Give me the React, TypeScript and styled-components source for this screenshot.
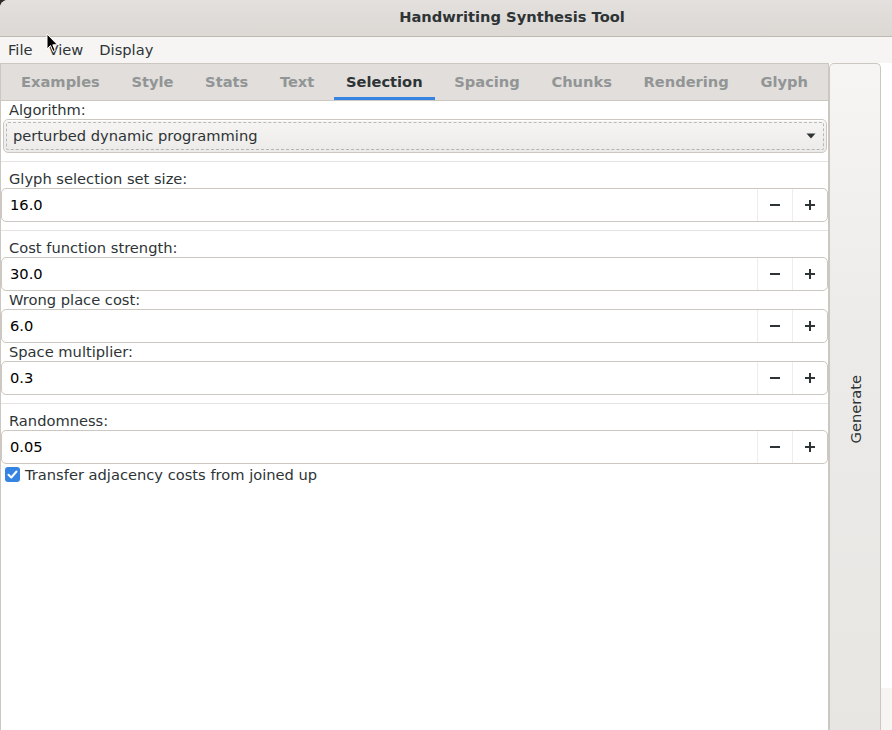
import React from "react";
import styled, { createGlobalStyle } from "styled-components";

const GlobalStyle = createGlobalStyle`
  html, body { margin: 0; padding: 0; background: #2b2b2b; }
  body { width: 892px; height: 730px; overflow: hidden; font-family: "DejaVu Sans", sans-serif; font-size: 14.67px; color: #2e3436; }
  * { box-sizing: border-box; }
`;

const FONT = "14.67px";

const Window = styled.div`
  position: relative;
  width: 892px;
  height: 730px;
  display: flex;
  flex-direction: column;
  background: #ffffff;
  border-top-left-radius: 8px;
  overflow: hidden;
`;

const TitleBar = styled.div`
  height: 37px;
  flex: none;
  display: flex;
  align-items: center;
  justify-content: center;
  padding-left: 132px;
  padding-bottom: 3px;
  background: linear-gradient(#e3e0dd, #dcd8d4);
  border-bottom: 1px solid #bfb9b3;
  font-weight: bold;
  font-size: ${FONT};
  color: #2e3436;
`;

const MenuBar = styled.div`
  height: 26px;
  flex: none;
  display: flex;
  align-items: center;
  padding-bottom: 2px;
  background: #f6f5f4;
`;

const MenuItem = styled.div`
  padding: 0 8px;
  font-size: ${FONT};
  color: #2e3436;
`;

const Main = styled.div`
  flex: 1;
  display: flex;
  min-height: 0;
`;

const Notebook = styled.div`
  width: 829px;
  flex: none;
  display: flex;
  flex-direction: column;
  border-left: 1px solid #cdc7c2;
  border-right: 1px solid #cdc7c2;
  border-top: 1px solid #cdc7c2;
`;

const TabHeader = styled.div`
  height: 37px;
  flex: none;
  display: flex;
  gap: 7.6px;
  padding-left: 8px;
  background: #e1dedb;
  border-bottom: 1px solid #cdc7c2;
  overflow: hidden;
`;

const Tab = styled.div<{ $active?: boolean }>`
  height: 36px;
  padding: 0 12px 2px;
  display: flex;
  align-items: center;
  flex: none;
  font-weight: bold;
  font-size: ${FONT};
  color: ${(p) => (p.$active ? "#2e3436" : "#929595")};
  box-shadow: ${(p) => (p.$active ? "inset 0 -3px 0 #3584e4" : "none")};
`;

const Page = styled.div`
  flex: 1;
  background: #ffffff;
  display: flex;
  flex-direction: column;
`;

const Label = styled.div`
  height: 18px;
  line-height: 18px;
  padding-left: 8px;
  font-size: ${FONT};
  color: #2e3436;
`;

const Combo = styled.div`
  height: 34px;
  margin: 0 1px 0 2px;
  display: flex;
  align-items: center;
  justify-content: space-between;
  padding: 0 10px 1px 9px;
  border: 1px solid #cdc7c2;
  border-radius: 5px;
  background: linear-gradient(#f6f5f4, #edebe9);
  outline: 1px dashed rgba(46, 52, 54, 0.3);
  outline-offset: -4px;
  font-size: ${FONT};
  color: #2e3436;
  box-shadow: inset 0 1px rgba(255, 255, 255, 0.8);
`;

const Separator = styled.div`
  height: 1px;
  margin: 8px 0;
  background: #e6e3e0;
  flex: none;
`;

const Spin = styled.div`
  height: 34px;
  display: flex;
  align-items: stretch;
  border: 1px solid #cdc7c2;
  border-radius: 5px;
  background: #ffffff;
  flex: none;
`;

const SpinValue = styled.div`
  flex: 1;
  display: flex;
  align-items: center;
  padding: 0 0 1px 8px;
  font-size: ${FONT};
  color: #000000;
`;

const SpinButton = styled.div`
  width: 35px;
  display: flex;
  align-items: center;
  justify-content: center;
  border-left: 1px solid #efedeb;
  color: #2e3436;
`;

const CheckRow = styled.div`
  height: 22px;
  display: flex;
  align-items: center;
  gap: 5px;
  padding: 0 0 1px 4px;
  font-size: ${FONT};
  color: #2e3436;
`;

const CheckBox = styled.div`
  width: 15px;
  height: 15px;
  border-radius: 3px;
  background: #3584e4;
  display: flex;
  align-items: center;
  justify-content: center;
`;

const GenerateButton = styled.div`
  width: 52px;
  flex: none;
  display: flex;
  align-items: center;
  justify-content: center;
  padding-top: 24px;
  border: 1px solid #cdc7c2;
  border-bottom: none;
  border-radius: 5px 5px 0 0;
  background: linear-gradient(#f6f5f4, #edebe9 40%, #e8e6e3);
`;

const Vertical = styled.span`
  display: inline-block;
  writing-mode: vertical-rl;
  transform: rotate(180deg);
  font-size: ${FONT};
  color: #2e3436;
`;

const RightStrip = styled.div`
  flex: 1;
  display: flex;
  flex-direction: column;
  justify-content: flex-end;
  background: #ffffff;
`;

const StripBottom = styled.div`
  height: 42px;
  background: #f6f5f4;
`;

const Cursor = styled.svg`
  position: absolute;
  left: 46px;
  top: 33px;
`;

const Minus = () => (
  <svg width="12" height="12" viewBox="0 0 12 12">
    <rect x="1" y="5" width="10" height="2" fill="#2e3436" />
  </svg>
);

const Plus = () => (
  <svg width="12" height="12" viewBox="0 0 12 12">
    <rect x="1" y="5" width="10" height="2" fill="#2e3436" />
    <rect x="5" y="1" width="2" height="10" fill="#2e3436" />
  </svg>
);

const SpinField = ({ value }: { value: string }) => (
  <Spin>
    <SpinValue>{value}</SpinValue>
    <SpinButton>
      <Minus />
    </SpinButton>
    <SpinButton>
      <Plus />
    </SpinButton>
  </Spin>
);

const tabs = ["Examples", "Style", "Stats", "Text", "Selection", "Spacing", "Chunks", "Rendering", "Glyph"];

export default function App() {
  return (
    <>
      <GlobalStyle />
      <Window>
        <TitleBar>Handwriting Synthesis Tool</TitleBar>
        <MenuBar>
          <MenuItem>File</MenuItem>
          <MenuItem>View</MenuItem>
          <MenuItem>Display</MenuItem>
        </MenuBar>
        <Main>
          <Notebook>
            <TabHeader>
              {tabs.map((t) => (
                <Tab key={t} $active={t === "Selection"}>
                  {t}
                </Tab>
              ))}
            </TabHeader>
            <Page>
              <Label>Algorithm:</Label>
              <Combo>
                <span>perturbed dynamic programming</span>
                <svg width="10" height="6" viewBox="0 0 10 6">
                  <path d="M0.5 0.5 L9.5 0.5 L5 5.5 Z" fill="#2e3436" />
                </svg>
              </Combo>
              <Separator />
              <Label>Glyph selection set size:</Label>
              <SpinField value="16.0" />
              <Separator />
              <Label>Cost function strength:</Label>
              <SpinField value="30.0" />
              <Label>Wrong place cost:</Label>
              <SpinField value="6.0" />
              <Label>Space multiplier:</Label>
              <SpinField value="0.3" />
              <Separator />
              <Label>Randomness:</Label>
              <SpinField value="0.05" />
              <CheckRow>
                <CheckBox>
                  <svg width="11" height="11" viewBox="0 0 11 11">
                    <path d="M1.5 5.8 L4.3 8.5 L9.5 2.5" fill="none" stroke="#ffffff" strokeWidth="2" strokeLinecap="round" strokeLinejoin="round" />
                  </svg>
                </CheckBox>
                <span>Transfer adjacency costs from joined up</span>
              </CheckRow>
            </Page>
          </Notebook>
          <GenerateButton>
            <Vertical>Generate</Vertical>
          </GenerateButton>
          <RightStrip>
            <StripBottom />
          </RightStrip>
        </Main>
        <Cursor width="13" height="20" viewBox="0 0 13 20">
          <path d="M1 1 L1 16 L4.5 12.5 L7 18.5 L9.2 17.5 L6.8 11.8 L11.5 11.8 Z" fill="#000" stroke="#fff" strokeWidth="1" strokeLinejoin="round" />
        </Cursor>
      </Window>
    </>
  );
}
